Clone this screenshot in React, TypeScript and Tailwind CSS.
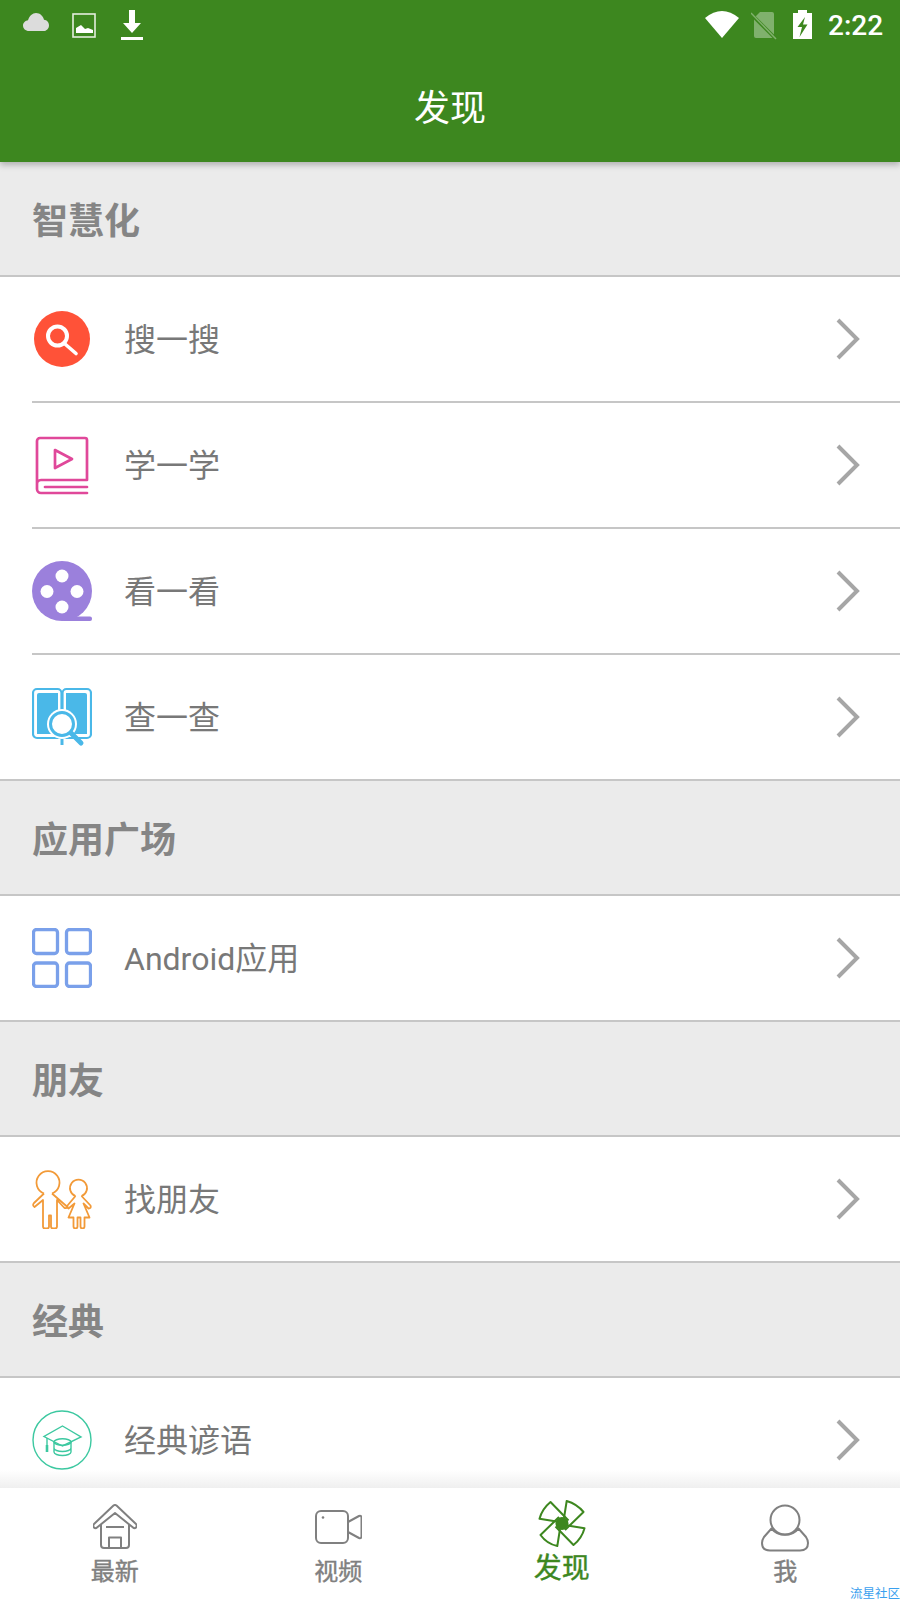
import React from 'react';

const GREEN = '#3d871f';

const Chevron: React.FC = () => (
  <svg width="24" height="42" viewBox="0 0 24 42" fill="none" className="shrink-0">
    <path d="M2 2l19 19L2 40" stroke="#a6a6a6" strokeWidth="4" />
  </svg>
);

const SearchIcon = () => (
  <svg width="60" height="60" viewBox="0 0 60 60" fill="none">
    <circle cx="30" cy="30" r="28" fill="#ff5238" />
    <circle cx="25.500" cy="27" r="9.500" stroke="#fff" strokeWidth="4" />
    <path d="M33 35l11 9.500" stroke="#fff" strokeWidth="3.600" strokeLinecap="round" />
  </svg>
);

const BookIcon = () => (
  <svg width="60" height="60" viewBox="0 0 60 60" fill="none" stroke="#e0489a" strokeWidth="2.700" strokeLinecap="round" strokeLinejoin="round">
    <path d="M5 49V6a3 3 0 0 1 3-3h45a2 2 0 0 1 2 2v40H9a4 4 0 0 0-4 4v5a4 4 0 0 0 4 4h46" />
    <path d="M13 52h42" />
    <path d="M23 15l17 9-17 9z" />
  </svg>
);

const FilmIcon = () => (
  <svg width="60" height="60" viewBox="0 0 60 60" fill="none">
    <circle cx="30" cy="30" r="30" fill="#9b80dc" />
    <rect x="30" y="55.500" width="30" height="4.500" rx="2" fill="#9b80dc" />
    <circle cx="30" cy="15" r="6.500" fill="#fff" />
    <circle cx="15" cy="30.500" r="6.500" fill="#fff" />
    <circle cx="45" cy="30.500" r="6.500" fill="#fff" />
    <circle cx="30" cy="46" r="6.500" fill="#fff" />
  </svg>
);

const LookupIcon = () => (
  <svg width="60" height="60" viewBox="0 0 60 60" fill="none">
    <rect x="1" y="2" width="28.500" height="49" rx="4" stroke="#4ab8e8" strokeWidth="2.200" />
    <rect x="30.500" y="2" width="28.500" height="49" rx="4" stroke="#4ab8e8" strokeWidth="2.200" />
    <path d="M5 8a2 2 0 0 1 2-2h19v41H5z" fill="#4ab8e8" />
    <path d="M34 6h19a2 2 0 0 1 2 2v39H34z" fill="#4ab8e8" />
    <path d="M30 50v8" stroke="#4ab8e8" strokeWidth="3" />
    <circle cx="30" cy="37" r="15" fill="#fff" />
    <circle cx="30" cy="37" r="11.500" fill="#fff" stroke="#4ab8e8" strokeWidth="3" />
    <path d="M39 46l10 10" stroke="#4ab8e8" strokeWidth="5" strokeLinecap="round" />
  </svg>
);

const GridIcon = () => (
  <svg width="60" height="60" viewBox="0 0 60 60" fill="none" stroke="#7aa0ea" strokeWidth="3.300">
    <rect x="1.500" y="1.500" width="24" height="24" rx="3" />
    <rect x="34.500" y="1.500" width="24" height="24" rx="3" />
    <rect x="1.500" y="35" width="24" height="23.500" rx="3" />
    <rect x="34.500" y="35" width="24" height="23.500" rx="3" />
  </svg>
);

const KidsIcon = () => (
  <svg width="60" height="60" viewBox="0 0 60 60" fill="none" stroke="#f29a38" strokeWidth="1.800" strokeLinejoin="round">
    <g transform="translate(0 1.500)">
      <path d="M12 23A11.500 11.500 0 1 1 20 23" />
      <path d="M12 23L2 32.500Q0 35 2.500 36.500L11 29.500V56Q11 58 13 58H15Q17 58 17 56V45H19V56Q19 58 21 58H23Q25 58 25 56V29.500L32 37Q34 38.500 35.500 36.500L20 23" />
      <g transform="translate(1.500 0)">
        <path d="M42 25.500A8.500 8.500 0 1 1 48 25.500" />
        <path d="M42 25.500L34 35Q33 37 35 38L41 33L35 47H40V56Q40 58 42 58Q44 58 44 56V47H47V56Q47 58 49 58Q51 58 51 56V47H56L50 33L55 38Q58 38 57 35L48 25.500" />
      </g>
    </g>
  </svg>
);

const GradIcon = () => (
  <svg width="60" height="60" viewBox="0 0 60 60" fill="none" stroke="#3cc8a0" strokeWidth="1.400">
    <circle cx="30" cy="30" r="29" />
    <path d="M30.500 16L49 27 30.500 36 12 26.500z" />
    <ellipse cx="30.500" cy="32" rx="8.500" ry="3.200" />
    <path d="M22 32v10c0 2 4 3.500 8.500 3.500S39 44 39 42V32M22 38c0 2 4 3.500 8.500 3.500S39 40 39 38" />
    <path d="M15 28v14" />
    <path d="M15 35v7" strokeWidth="2.600" />
  </svg>
);

const HomeIcon = () => (
  <svg width="44" height="46" viewBox="0 0 44 46" fill="none" stroke="#808080" strokeWidth="2" strokeLinejoin="round">
    <path d="M20.500 1.500Q22 .5 23.500 1.500L43 20Q44.500 22 43 23.500 41.500 25 40 23.500L22 9 4 23.500Q2.500 25 1 23.500-.5 22 1 20z" />
    <path d="M8 21V41a3 3 0 0 0 3 3H33a3 3 0 0 0 3-3V21M13 23H31" />
    <path d="M16 44V33.500H28V44" />
  </svg>
);

const VideoIcon = () => (
  <svg width="47" height="34" viewBox="0 0 47 34" fill="none" stroke="#808080" strokeWidth="2" strokeLinejoin="round">
    <rect x="1" y="1" width="32" height="32" rx="5" />
    <path d="M33 12l11-6Q46.500 5 46.500 8V26Q46.500 29 44 28L33 22" />
    <circle cx="8" cy="7.500" r="1.300" fill="#808080" stroke="none" />
  </svg>
);

const PinwheelIcon = () => (
  <svg width="48" height="48" viewBox="0 0 48 48" fill="none" stroke={GREEN} strokeWidth="2" strokeLinejoin="round">
    <path d="M26 18L28.700 1Q39 4 45.500 12L27 30" />
    <path d="M29.500 25.500L46.500 28.200Q44 38 35.500 45L17.500 26.500" />
    <path d="M22 29L19.300 46Q9 44 2.500 35L21 17" />
    <path d="M18.500 21.500L1.500 18.800Q4 9 12.500 2L30.500 20.500" />
    <circle cx="24" cy="23.500" r="6.500" fill={GREEN} stroke="none" />
  </svg>
);

const MeIcon = () => (
  <svg width="48" height="49" viewBox="0 0 48 49" fill="none" stroke="#808080" strokeWidth="2">
    <circle cx="24" cy="17" r="14.500" />
    <path d="M10.500 25.500L3 34Q1 37 1 40 1 47.500 9 47.500H39Q47 47.500 47 40 47 37 45 34L37.500 25.500A17.500 17.500 0 0 1 10.500 25.500z" strokeLinejoin="round" />
  </svg>
);

const StatusBar = () => (
  <div className="flex h-[52px] items-start text-white">
    <svg width="26" height="18" viewBox="0 0 26 18" className="ml-[23px] mt-[13px]" fill="#dcdcdc">
      <path d="M6 18C2.500 18 0 15.500 0 12.500S2.500 7.500 5 7.200C6.300 3 9.500 0 13 0c4 0 7 2.800 8 6.800 2.800.3 5 2.600 5 5.600S23.500 18 20.500 18z" />
    </svg>
    <svg width="24" height="25" viewBox="0 0 24 25" className="ml-[23px] mt-[13px]" fill="none">
      <rect x="1" y="1" width="22" height="23" stroke="#e4eede" strokeWidth="1.600" />
      <path d="M4 20v-5l5-3 4 4 3-1 5 2v3z" fill="#fff" />
    </svg>
    <svg width="22" height="30" viewBox="0 0 22 30" className="ml-[25px] mt-[10px]" fill="#fff">
      <path d="M8 0h6v13h6L11 23 2 13h6z" />
      <rect x="0" y="27" width="22" height="3" />
    </svg>
    <svg width="34" height="27" viewBox="0 0 34 27" className="ml-[562px] mt-[11px]" fill="#fff">
      <path d="M0 7Q17-7 34 7L17 27z" />
    </svg>
    <svg width="27" height="29" viewBox="0 0 27 29" className="ml-[12px] mt-[12px]">
      <path d="M9 0h12a2 2 0 0 1 2 2v24H5a2 2 0 0 1-2-2V6z" fill="#fff" fillOpacity="0.35" />
      <path d="M0 2l25 25" stroke={GREEN} strokeWidth="3.500" />
      <path d="M0 1l25 26" stroke="#fff" strokeOpacity="0.35" strokeWidth="1.500" />
    </svg>
    <svg width="19" height="29" viewBox="0 0 19 29" className="ml-[15px] mt-[10px]">
      <path d="M5 0h9v3h5v26H0V3h5z" fill="#fff" />
      <path d="M12 7L4.500 17H9L6.500 27l8-12.500H10z" fill={GREEN} />
    </svg>
    <span className="ml-[16px] mt-[9px] text-[28px] leading-[33px] font-medium">2:22</span>
  </div>
);

const SectionHead: React.FC<{ title: string }> = ({ title }) => (
  <div className="flex h-[115px] shrink-0 items-center border-b-2 border-[#c6c6c6] bg-[#ebebeb] pl-8 pt-[6px] text-[36px] font-bold text-[#858585]">
    {title}
  </div>
);

const Row: React.FC<{ icon: React.ReactNode; label: string; inset?: boolean }> = ({ icon, label, inset }) => (
  <div className={inset ? 'bg-white pl-8' : 'bg-white'}>
    <div className={inset ? 'flex h-[126px] items-center border-b-2 border-[#c6c6c6]' : 'flex h-[126px] items-center border-b-2 border-[#c6c6c6] pl-8'}>
      <div className="h-[60px] w-[60px] shrink-0">{icon}</div>
      <span className="ml-8 flex-1 pt-[2px] text-[32px] text-[#787878]">{label}</span>
      <div className="mr-[40px]">
        <Chevron />
      </div>
    </div>
  </div>
);

const Tab: React.FC<{ icon: React.ReactNode; label: string; active?: boolean; className?: string }> = ({ icon, label, active, className }) => (
  <div className={`flex flex-1 flex-col items-center ${active ? 'pt-3' : 'pt-[15px]'} ${className ?? ''}`}>
    <div className="flex h-[48px] items-center justify-center">{icon}</div>
    <span
      className={
        active
          ? 'mt-[5px] text-[28px] leading-[32px] text-[#3d871f] [-webkit-text-stroke:0.4px_#3d871f]'
          : 'mt-[6px] text-[24px] leading-[30px] text-[#808080] [-webkit-text-stroke:0.4px_#808080]'
      }
    >
      {label}
    </span>
  </div>
);

export default function App() {
  return (
    <div className="relative flex h-[1600px] w-[900px] flex-col overflow-hidden bg-white font-['Roboto','Noto_Sans_CJK_SC',sans-serif]">
      <header className="relative z-10 h-[162px] shrink-0 bg-[#3d871f] shadow-[0_3px_6px_rgba(0,0,0,0.25)]">
        <StatusBar />
        <div className="flex h-[110px] items-center justify-center pt-1 text-[36px] text-white">发现</div>
      </header>

      <main className="min-h-0 flex-1 overflow-hidden">
        <SectionHead title="智慧化" />
        <Row icon={<SearchIcon />} label="搜一搜" inset />
        <Row icon={<BookIcon />} label="学一学" inset />
        <Row icon={<FilmIcon />} label="看一看" inset />
        <Row icon={<LookupIcon />} label="查一查" />
        <SectionHead title="应用广场" />
        <Row icon={<GridIcon />} label="Android应用" />
        <SectionHead title="朋友" />
        <Row icon={<KidsIcon />} label="找朋友" />
        <SectionHead title="经典" />
        <Row icon={<GradIcon />} label="经典谚语" />
      </main>

      <nav className="relative flex h-[112px] shrink-0 bg-white">
        <div className="absolute bottom-full left-0 h-[18px] w-full bg-gradient-to-b from-white/0 to-[#efefef]" />
        <Tab icon={<HomeIcon />} label="最新" className="pl-[3px]" />
        <Tab icon={<VideoIcon />} label="视频" />
        <Tab icon={<PinwheelIcon />} label="发现" active />
        <Tab icon={<MeIcon />} label="我" className="pr-[3px]" />
        <span className="absolute right-0 bottom-0 text-[12.500px] leading-[12.500px] text-[#3aa0ee]">流星社区</span>
      </nav>
    </div>
  );
}
